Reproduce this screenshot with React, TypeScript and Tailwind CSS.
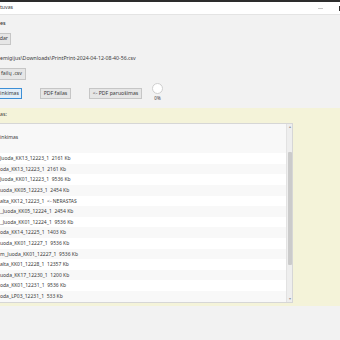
const rows = [
  "inkimas",
  "",
  "Juoda_KK13_12223_1  2161 Kb",
  "oda_KK13_12223_1  2161 Kb",
  "Juoda_KK01_12223_1  9536 Kb",
  "uoda_KK05_12223_1  2454 Kb",
  "alta_KK12_12223_1  <- NERASTAS",
  "_Juoda_KK05_12224_1  2454 Kb",
  "_Juoda_KK01_12224_1  9536 Kb",
  "oda_KK14_12225_1  1403 Kb",
  "uoda_KK01_12227_1  9536 Kb",
  "m_Juoda_KK01_12227_1  9536 Kb",
  "alta_KK01_12228_1  12357 Kb",
  "uoda_KK17_12230_1  1200 Kb",
  "oda_KK01_12231_1  9536 Kb",
  "oda_LP03_12231_1  533 Kb",
]

export default function App() {
  return (
    <div className="h-[340px] w-[340px] overflow-hidden bg-[#f2f2f2] font-['Noto_Sans',sans-serif] text-[5.2px] text-[#3a3a3a]">
      {/* title bar */}
      <div className="flex h-[15px] items-center border-t-2 border-b border-[#2d2d2d] border-b-[#e4e4e4] bg-white">
        <span className="whitespace-pre leading-none">tuvas</span>
        <div className="ml-auto h-px w-[5px] bg-[#c8c8c8]" />
        <div className="ml-[16px] h-[5px] w-px bg-[#333]" />
      </div>

      <div className="mt-[4px] h-[8px] font-semibold leading-[8px]">es</div>

      <button className="mt-[6px] flex h-[12px] w-[11px] items-center justify-end border border-l-0 border-[#c6c6c6] bg-[#e6e6e6] pr-[2px] leading-none">
        <span className="whitespace-pre">dar</span>
      </button>

      <div className="mt-[9px] h-[8px] whitespace-pre leading-[8px]">
        emigijus\Downloads\PrintPrint-2024-04-12-08-40-56.csv
      </div>

      <button className="mt-[6px] flex h-[12px] w-[26px] items-center justify-end border border-l-0 border-[#c6c6c6] bg-[#e6e6e6] pr-[3px] leading-none">
        <span className="whitespace-pre">failų .csv</span>
      </button>

      {/* action row */}
      <div className="mt-[3px] flex h-[17px] items-start">
        <button className="mt-[5px] flex h-[11px] w-[22px] items-center justify-end border border-l-0 border-[#3d8fd6] bg-[#e3eef8] pr-[2px] leading-none">
          <span className="whitespace-pre">inkimas</span>
        </button>
        <button className="ml-[18px] mt-[5px] flex h-[11px] w-[31px] items-center justify-center border border-[#c6c6c6] bg-[#e6e6e6] leading-none">
          PDF failas
        </button>
        <button className="ml-[18px] mt-[5px] flex h-[11px] w-[53px] items-center justify-center border border-[#c6c6c6] bg-[#e6e6e6] leading-none">
          {"<- PDF paruošimas"}
        </button>
        <div className="ml-[10px] flex w-[11px] flex-col items-center">
          <div className="h-[11px] w-[11px] rounded-full border border-[#cfcfcf] bg-white" />
          <div className="mt-px text-[4.5px] leading-[6px]">0%</div>
        </div>
      </div>

      {/* list panel */}
      <div className="mt-[8px] bg-[#f4f3d9] pb-[3px] pt-[2px]">
        <div className="h-[8px] leading-[8px]">as:</div>
        <div className="mt-[5px] flex h-[180px] w-[293px] border border-l-0 border-[#d6d6d6] bg-white">
          <div className="flex-1 overflow-hidden text-[5px]">
            <div className="h-[8px] bg-[#f8f8f8]" />
            {rows.map((r, i) => (
              <div
                key={i}
                className={
                  "h-[10.6px] whitespace-pre leading-[10.6px] " +
                  (i % 2 === 1 || i === 0 ? "bg-[#f8f8f8]" : "bg-white")
                }
              >
                {r}
              </div>
            ))}
          </div>
          <div className="flex w-[6px] flex-col border-l border-[#e2e2e2] bg-[#eeeeee]">
            <div className="flex h-[6px] items-center justify-center text-[4px] leading-none text-[#999]">▴</div>
            <div className="h-[22px]" />
            <div className="mx-auto h-[113px] w-[4px] rounded-[1px] bg-[#cbcbcb]" />
            <div className="flex-1" />
            <div className="flex h-[6px] items-center justify-center text-[4px] leading-none text-[#999]">▾</div>
          </div>
        </div>
      </div>
    </div>
  )
}
